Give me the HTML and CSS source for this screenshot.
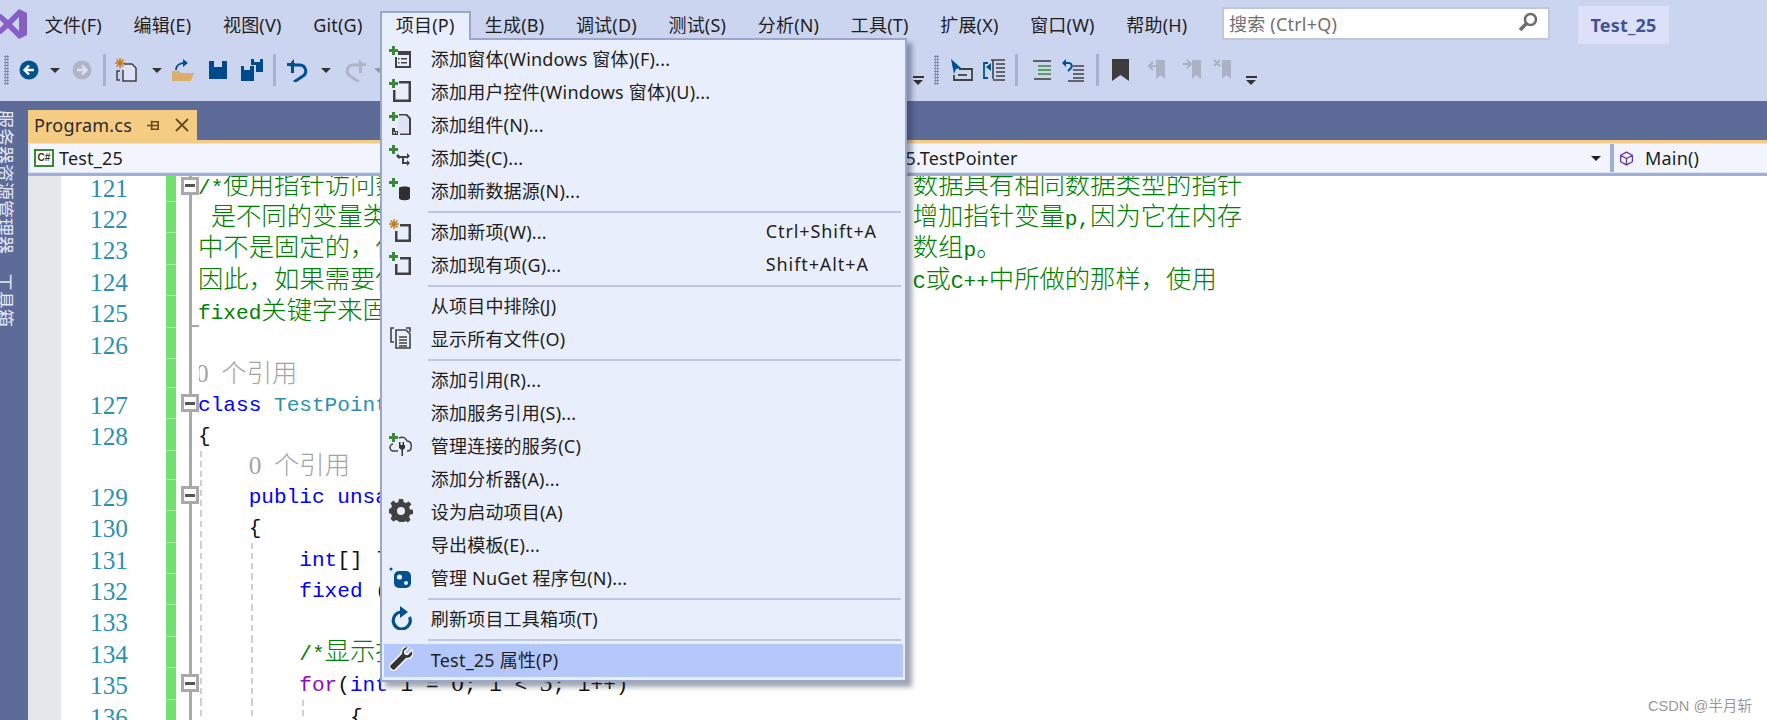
FILE: index.html
```html
<!DOCTYPE html>
<html lang="zh-CN">
<head>
<meta charset="utf-8">
<title>Test_25 - Visual Studio</title>
<link rel="stylesheet" href="styles.css">
</head>
<body>
<div class="app">
  <header class="menubar">
    <svg class="logo" viewBox="0 0 27 30"><path fill="#865fc5" fill-rule="evenodd" d="M19 0 27 4V26L19 30 8 19 1 25-3 23V7L1 5 8 11ZM19 8 12 15 19 22ZM0 11V19L4 15Z"/></svg>
    <nav class="menus">
      <span class="mi">文件(F)</span>
      <span class="mi">编辑(E)</span>
      <span class="mi">视图(V)</span>
      <span class="mi">Git(G)</span>
      <span class="mi open">项目(P)
        <div class="drop">
          <div class="it"><svg class="ic" viewBox="0 0 24 24"><path fill="#388a34" d="M3 0h3v3h3v3H6v3H3V6H0V3h3z"/><path fill="#424242" d="M9 5h13v17H6v-11h2v9h12V9H9z"/><path fill="#424242" d="M9 12h1.500v1.500H9zM9 16h1.500v1.500H9zM12 12h6v1.500h-6zM12 16h6v1.500h-6z"/></svg><span>添加窗体(Windows 窗体)(F)...</span></div>
          <div class="it"><svg class="ic" viewBox="0 0 24 24"><path fill="#388a34" d="M3 0h3v3h3v3H6v3H3V6H0V3h3z"/><path fill="#424242" d="M10 2h12v21H4V11h2.500v9.500h13V4.500H10z"/></svg><span>添加用户控件(Windows 窗体)(U)...</span></div>
          <div class="it"><svg class="ic" viewBox="0 0 24 24"><path fill="#388a34" d="M3 0h3v3h3v3H6v3H3V6H0V3h3z"/><path fill="#dfe1f5" d="M9 3h8l4 4v14H9z"/><path fill="#424242" d="M10 2h8l4 4v17H11v-1.500h9V7l-3-3.500h-7zM3 16h3v3h3v4H3zM4.500 20v1.500H6V20zM7 20v1.500h1V20z"/></svg><span>添加组件(N)...</span></div>
          <div class="it"><svg class="ic" viewBox="0 0 24 24"><path fill="#388a34" d="M3 0h3v3h3v3H6v3H3V6H0V3h3z"/><path fill="#424242" d="M9 9l3 3-2 2-3-3zM11 11h8v2h-4v4h3v2h-5v-6h-2zM18 8l3 3-3 3zM18 15l3 3-3 3z"/></svg><span>添加类(C)...</span></div>
          <div class="it"><svg class="ic" viewBox="0 0 24 24"><path fill="#388a34" d="M3 0h3v3h3v3H6v3H3V6H0V3h3z"/><path fill="#2f2f2f" d="M10 10c0-2 11-2 11 0v10c0 3-11 3-11 0z"/></svg><span>添加新数据源(N)...</span></div>
          <div class="sep"></div>
          <div class="it"><svg class="ic" viewBox="0 0 24 24"><path stroke="#c27d1a" stroke-width="1.500" d="M5 0v10M0 5h10M1.500 1.500l7 7M8.500 1.500l-7 7"/><path fill="#424242" d="M11 5h11v18H6V12h2.500v8.500h11v-13H11z"/></svg><span>添加新项(W)...</span><span class="sc">Ctrl+Shift+A</span></div>
          <div class="it"><svg class="ic" viewBox="0 0 24 24"><path fill="#388a34" d="M3 0h3v3h3v3H6v3H3V6H0V3h3z"/><path fill="#424242" d="M11 5h11v18H6V12h2.500v8.500h11v-13H11z"/></svg><span>添加现有项(G)...</span><span class="sc">Shift+Alt+A</span></div>
          <div class="sep"></div>
          <div class="it"><span class="ic"></span><span>从项目中排除(J)</span></div>
          <div class="it"><svg class="ic" viewBox="0 0 24 24"><path fill="none" stroke="#424242" stroke-width="1.600" d="M5 2H2v14h3M17 2h4v4"/><path fill="#e9eefc" stroke="#424242" stroke-width="1.600" d="M7 4h10l4 4v14H7z"/><path stroke="#424242" stroke-width="1.400" d="M10 11h8M10 14h8M10 17h8M10 20h8"/></svg><span>显示所有文件(O)</span></div>
          <div class="sep"></div>
          <div class="it"><span class="ic"></span><span>添加引用(R)...</span></div>
          <div class="it"><span class="ic"></span><span>添加服务引用(S)...</span></div>
          <div class="it"><svg class="ic" viewBox="0 0 24 24"><path fill="#388a34" d="M3 0h3v3h3v3H6v3H3V6H0V3h3z"/><path fill="none" stroke="#424242" stroke-width="1.500" d="M9 18H5a3.500 3.500 0 0 1-1-7M10 5c4-2 7 0 8 3 4 0 5 4 4 7 0 2-2 3-4 3"/><path fill="#333" d="M10 9h1.500v3h2V9H15v3h1v3l-2 2v6h-1.500v-6l-2.500-2v-3z"/></svg><span>管理连接的服务(C)</span></div>
          <div class="it"><span class="ic"></span><span>添加分析器(A)...</span></div>
          <div class="it"><svg class="ic" viewBox="0 0 24 24"><path fill="#424242" fill-rule="evenodd" d="M10 1h4l.7 3 2.300 1 2.700-1.600 2.800 2.800L20 9l1 2.300 3 .7v4l-3 .7-1 2.300 1.600 2.700-2.800 2.800L17 23l-2.300 1H10l-.7-1-2.300-1-2.700 1.600-2.800-2.800L3 18l-1-2.300-3-.7v-4l3-.7 1-2.300-1.500-2.800 2.800-2.800L7 5l2.300-1zM12 9a4 4 0 1 0 0 8 4 4 0 0 0 0-8z" transform="translate(0 -1)"/></svg><span>设为启动项目(A)</span></div>
          <div class="it"><span class="ic"></span><span>导出模板(E)...</span></div>
          <div class="it"><svg class="ic" viewBox="0 0 24 24"><circle cx="2" cy="4" r="1.500" fill="#00518f"/><rect x="5" y="6" width="17" height="17" rx="5" fill="#00518f"/><circle cx="10.500" cy="12" r="2.600" fill="#e9eefc"/><circle cx="17" cy="18" r="2" fill="#e9eefc"/></svg><span>管理 NuGet 程序包(N)...</span></div>
          <div class="sep"></div>
          <div class="it"><svg class="ic" viewBox="0 0 24 24"><path fill="none" stroke="#00518f" stroke-width="3.200" d="M20.500 11A8.500 8.500 0 1 1 12 6"/><path fill="#00518f" d="M11 0l8 6-8 6z"/></svg><span>刷新项目工具箱项(T)</span></div>
          <div class="sep"></div>
          <div class="it hot"><svg class="ic" viewBox="0 0 24 24"><path fill="#333" stroke="#fff" stroke-width="1.300" d="M23 3l-4.500 4.500-2.500-.5-.5-2.500L20 0c-3.500-1.500-8 1-7.500 6.500L1 18c-2 2 3 7 5 5L17.500 11.500C23 12 25 7 23 3z"/></svg><span>Test_25 属性(P)</span></div>
        </div>
      </span>
      <span class="mi">生成(B)</span>
      <span class="mi">调试(D)</span>
      <span class="mi">测试(S)</span>
      <span class="mi">分析(N)</span>
      <span class="mi">工具(T)</span>
      <span class="mi">扩展(X)</span>
      <span class="mi">窗口(W)</span>
      <span class="mi">帮助(H)</span>
    </nav>
    <div class="search"><span>搜索 (Ctrl+Q)</span><svg class="mag" viewBox="0 0 20 20"><circle cx="12.500" cy="7.500" r="5.500" fill="none" stroke="#6d6d6d" stroke-width="2.600"/><path stroke="#6d6d6d" stroke-width="3.600" d="M8.500 11.500 2 18"/></svg></div>
    <div class="title">Test_25</div>
  </header>

  <div class="toolbar">
    <span class="grip"></span>
    <svg class="t20" viewBox="0 0 20 20"><circle cx="10" cy="10" r="9.500" fill="#00518f"/><path fill="none" stroke="#fff" stroke-width="2.400" d="M15 10H6M10 5.500 5.500 10l4.500 4.500"/></svg>
    <span class="dd"></span>
    <svg class="t20" viewBox="0 0 20 20"><circle cx="10" cy="10" r="9.500" fill="#b0b5c6"/><path fill="none" stroke="#dde2f2" stroke-width="2.400" d="M5 10h9M10 5.500l4.500 4.500-4.500 4.500"/></svg>
    <span class="tsep"></span>
    <svg class="t24" viewBox="0 0 24 24"><path stroke="#c27d1a" stroke-width="1.500" d="M6 0v10M1 5h10M2.500 1.500l7 7M9.500 1.500l-7 7"/><path fill="#dfe1f5" stroke="#424242" stroke-width="1.500" d="M10 6h8l4 4v13H9V12"/><path fill="none" stroke="#424242" stroke-width="1.500" d="M6 13H3v9h3"/></svg>
    <span class="dd"></span>
    <svg class="t24" viewBox="0 0 24 24"><path fill="#dcae6c" d="M1 13h7l2 2h13l-3 8H1z"/><path fill="none" stroke="#00518f" stroke-width="1.800" d="M5 12C5 7 9 5 14 5"/><path fill="#00518f" d="M12 1l5 4-5 4z"/></svg>
    <svg class="t20" viewBox="0 0 20 20"><path fill="#00498c" fill-rule="evenodd" d="M1 1h18v18H1zM6 1v6h8V1z"/></svg>
    <svg class="t24" viewBox="0 0 24 24"><path fill="#00498c" fill-rule="evenodd" d="M1 8h13v15H1zM4 8v4h6V8z"/><path fill="#00498c" fill-rule="evenodd" d="M11 1h12v13h-7V7h-5zM14 1v3h6V1z"/></svg>
    <span class="tsep"></span>
    <svg class="t24" viewBox="0 0 24 24"><path fill="none" stroke="#00518f" stroke-width="3" d="M4 7h10a6 6 0 0 1 3 11L8 24"/><path fill="#00518f" d="M8 1v14H5V4z"/><path fill="#00518f" d="M1 5h8v3H1z"/></svg>
    <span class="dd"></span>
    <svg class="t24" viewBox="0 0 24 24"><path fill="none" stroke="#b0b5c6" stroke-width="3" d="M20 7H10a6 6 0 0 0-3 11l9 6"/><path fill="#b0b5c6" d="M16 1v14h3V4z"/><path fill="#b0b5c6" d="M15 5h8v3h-8z"/></svg>
    <span class="dd off"></span>
    <span></span>
    <span class="ov"></span>
    <span class="grip"></span>
    <svg class="t24" viewBox="0 0 24 24"><path fill="#00518f" d="M2 1l10 9-5 1-2 5z"/><path fill="none" stroke="#424242" stroke-width="1.800" d="M10 11h13v11H5v-5"/><path stroke="#424242" stroke-width="1.800" d="M9 17h9"/></svg>
    <svg class="t24" viewBox="0 0 24 24"><path fill="none" stroke="#00518f" stroke-width="1.800" d="M6 5H2v15h4"/><path fill="#00518f" d="M4 9l5-4v8z"/><path fill="none" stroke="#424242" stroke-width="1.600" d="M9 2h14M11 2v19M14 6h9M14 10h9M14 14h9M14 18h9M11 22h12"/></svg>
    <span class="tsep"></span>
    <svg class="t24" viewBox="0 0 24 24"><path stroke="#424242" stroke-width="1.600" d="M3 3h18"/><path stroke="#388a34" stroke-width="1.600" d="M8 8h13M8 12h13M8 16h13"/><path stroke="#424242" stroke-width="1.600" d="M4 21h17"/></svg>
    <svg class="t24" viewBox="0 0 24 24"><path fill="none" stroke="#00518f" stroke-width="2" d="M3 5h5a3 3 0 0 1 2 5l-3 3"/><path fill="#00518f" d="M1 5l4-4v8z"/><path stroke="#424242" stroke-width="1.600" d="M12 8h11M12 12h11M12 16h11M12 20h11M7 23h16"/></svg>
    <span class="tsep"></span>
    <svg class="t24" viewBox="0 0 24 24"><path fill="#3c3c3c" d="M3 1h17v22l-8.500-6L3 23z"/></svg>
    <svg class="t24" viewBox="0 0 24 24"><path fill="#abb2c4" d="M10 2h9v19l-4.500-4-4.500 4z"/><path fill="none" stroke="#abb2c4" stroke-width="2.200" d="M11 8H3M7 4 3 8l4 4"/></svg>
    <svg class="t24" viewBox="0 0 24 24"><path fill="#abb2c4" d="M10 2h9v19l-4.500-4-4.500 4z"/><path fill="none" stroke="#abb2c4" stroke-width="2.200" d="M1 6h8M5 2l4 4-4 4"/></svg>
    <svg class="t24" viewBox="0 0 24 24"><path fill="#abb2c4" d="M10 2h9v19l-4.500-4-4.500 4z"/><path stroke="#abb2c4" stroke-width="2.200" d="M2 2l6 6M8 2 2 8"/></svg>
    <span class="ov"></span>
  </div>

  <div class="body">
    <aside class="side"><span class="sv">服务器资源管理器</span><span class="sv">工具箱</span></aside>
    <main class="main">
      <div class="tabs">
        <div class="tab"><span>Program.cs</span>
          <svg class="pin" viewBox="0 0 14 14"><path fill="none" stroke="#6b4a1c" stroke-width="1.800" d="M0 7h5M5 2v10M5 3h7v8H5M5 7h7"/></svg>
          <svg class="cls" viewBox="0 0 14 14"><path stroke="#6b4a1c" stroke-width="1.900" d="M1 1l12 12M13 1 1 13"/></svg>
        </div>
      </div>
      <div class="nav">
        <div class="combo c1"><span class="cs">C#</span><span>Test_25</span></div>
        <div class="combo c2"><span>Test_25.TestPointer</span><span class="arrow"></span></div>
        <div class="combo c3"><svg class="cube" viewBox="0 0 14 14"><path fill="none" stroke="#6936aa" stroke-width="1.200" d="M7 1l5.500 3v6L7 13l-5.500-3V4zM1.500 4 7 7l5.500-3M7 7v6"/></svg><span>Main()</span></div>
      </div>
      <div class="editor">
        <div class="row"><span class="num">121</span><span class="chg"></span><span class="fold"><span class="box"></span></span><span class="code cm">/*<span class="z">使用指针访问数组元素</span>: <span class="z">在</span>C#<span class="z">中，数组名称和一个指向与数组</span><span class="z gap">数据具有相同数据类型的指针</span></span></div>
        <div class="row"><span class="num">122</span><span class="chg"></span><span class="fold"></span><span class="code cm"> <span class="z">是不同的变量类型。例如</span>,int *p<span class="z">和</span>int[] p<span class="z">是不同的类型</span>.<span class="z">可以</span><span class="z gap">增加指针变量</span>p,<span class="z">因为它在内存</span></span></div>
        <div class="row"><span class="num">123</span><span class="chg"></span><span class="fold"></span><span class="code cm"><span class="z">中不是固定的，但是数组地址在内存中是固定的，所以不能增加</span><span class="z gap">数组</span>p<span class="z">。</span></span></div>
        <div class="row"><span class="num">124</span><span class="chg"></span><span class="fold"></span><span class="code cm"><span class="z">因此，如果需要使用指针变量访问数组数据，可以像我们通常在</span><span class="gap">C</span><span class="z">或</span>C++<span class="z">中所做的那样，使用</span></span></div>
        <div class="row"><span class="num">125</span><span class="chg"></span><span class="fold tick"></span><span class="code cm">fixed<span class="z">关键字来固定指针。</span>*/</span></div>
        <div class="row"><span class="num">126</span><span class="chg"></span><span class="fold"></span><span class="code"></span></div>
        <div class="row ref"><span class="num"></span><span class="chg"></span><span class="fold"></span><span class="code gr lead"><span class="d">0</span> <span class="z">个引用</span></span></div>
        <div class="row"><span class="num">127</span><span class="chg"></span><span class="fold"><span class="box"></span></span><span class="code"><span class="kw">class</span> <span class="ty">TestPointer</span></span></div>
        <div class="row"><span class="num">128</span><span class="chg"></span><span class="fold"></span><span class="code">{</span></div>
        <div class="row ref"><span class="num"></span><span class="chg"></span><span class="fold"></span><span class="code g1 gr">    <span class="d">0</span> <span class="z">个引用</span></span></div>
        <div class="row"><span class="num">129</span><span class="chg"></span><span class="fold"><span class="box"></span></span><span class="code g1">    <span class="kw">public unsafe static void</span> Main()</span></div>
        <div class="row"><span class="num">130</span><span class="chg"></span><span class="fold"></span><span class="code g1">    {</span></div>
        <div class="row"><span class="num">131</span><span class="chg"></span><span class="fold"></span><span class="code g1 g2">        <span class="kw">int</span>[] list = { 10, 100, 200 };</span></div>
        <div class="row"><span class="num">132</span><span class="chg"></span><span class="fold"></span><span class="code g1 g2">        <span class="kw">fixed</span> (<span class="kw">int</span>* ptr = list)</span></div>
        <div class="row"><span class="num">133</span><span class="chg"></span><span class="fold"></span><span class="code g1 g2"></span></div>
        <div class="row"><span class="num">134</span><span class="chg"></span><span class="fold"></span><span class="code g1 g2 cm">        /*<span class="z">显示指针中数组地址</span>*/</span></div>
        <div class="row"><span class="num">135</span><span class="chg"></span><span class="fold"><span class="box"></span></span><span class="code g1 g2">        <span class="pk">for</span>(<span class="kw">int</span> i = <span class="d">0</span>; i &lt; <span class="d">3</span>; i++)</span></div>
        <div class="row"><span class="num">136</span><span class="chg"></span><span class="fold"></span><span class="code g1 g2 g3">            {</span></div>
      </div>
    </main>
  </div>
  <div class="mark">CSDN @半月斩</div>
</div>
</body>
</html>
```

FILE: styles.css
```css
* { box-sizing: border-box; }
html, body { margin: 0; padding: 0; background: #fff; }
body { font-family: "Noto Sans", "Noto Sans CJK SC", sans-serif; font-size: 18px; color: #1e1e1e; letter-spacing: .2px; }
svg { display: block; flex: none; }

.app { position: relative; width: 1767px; height: 720px; overflow: hidden; display: flex; flex-direction: column; }

/* menu bar */
.menubar { height: 50px; background: #ccd5f0; display: flex; align-items: flex-start; flex: none; }
.logo { width: 27px; height: 30px; margin-top: 9px; margin-right: 2px; }
.menus { display: flex; margin-top: 12px; width: 1193px; }
.mi { position: relative; height: 26px; line-height: 26px; padding: 0 15.800px; white-space: nowrap; }
.mi.open { background: #e9eefc; box-shadow: inset 2px 2px 0 #9ba7ca, inset -2px 0 0 #9ba7ca; padding: 1px 16px 0; height: 27px; margin: -1px -1.500px 0 1.500px; z-index: 5; }
.mi.open::after { content: ""; position: absolute; left: 2px; right: 2px; bottom: -2px; height: 2px; background: #e9eefc; }
.drop { position: absolute; left: 0; top: 27px; width: 527px; background: #e9eefc; border: 2px solid #9ba7ca; padding: 2.500px 2px 3px; box-shadow: 5px 5px 5px rgba(30,40,70,.42); line-height: normal; }
.it { height: 33px; display: flex; align-items: center; padding: 0 0 3px 5px; position: relative; }
.it.hot { background: #b3c7fb; }
.ic { width: 24px; height: 24px; margin-right: 18px; flex: none; }
.sc { position: absolute; left: 382px; letter-spacing: .9px; }
.sep { height: 2px; margin: 3px 2px 3px 44px; background: #bdc6e3; }

.search { width: 328px; height: 33px; margin: 7px 0 0 0; background: #fff; border: 2px solid #bfc7d8; display: flex; align-items: center; justify-content: space-between; padding: 0 10px 2px 5px; color: #717171; }
.mag { width: 20px; height: 20px; margin-bottom: 2px; }
.title { margin: 6px 0 0 28px; width: 91px; height: 38px; line-height: 38px; text-align: center; background: #dce0f8; color: #3f5590; font-weight: 700; }

/* tool bar */
.toolbar { height: 51px; padding-bottom: 11px; background: #ccd5f0; flex: none; display: grid; align-items: center; justify-items: center;
  grid-template-columns: 12px 34px 18px 36px 8px 36px 26px 26px 44px 24px 20px 28px 28px 30px 18px 520px 20px 16px 34px 32px 12px 40px 22px 26px 22px 52px 20px 40px 14px; }
.grip { width: 5px; height: 30px; background: radial-gradient(circle, #7e8aa8 1px, transparent 1.300px) 0 0 / 2.500px 3px; }
.t20 { width: 20px; height: 20px; }
.t24 { width: 24px; height: 24px; }
.dd { width: 0; height: 0; border: 5px solid transparent; border-top: 5px solid #333; border-bottom: 0; }
.dd.off { border-top-color: #8f97ab; }
.tsep { width: 3px; height: 32px; background: #a5b3d3; }
.ov { width: 11px; height: 8px; margin-top: 20px; border-top: 2px solid #333; position: relative; }
.ov::after { content: ""; display: block; margin: 2px auto 0; width: 0; height: 0; border: 5px solid transparent; border-top: 5px solid #333; border-bottom: 0; }

/* body */
.body { flex: 1; display: flex; min-height: 0; }
.side { width: 28px; background: #5d6b99; color: #e3e7f6; display: flex; flex-direction: column; gap: 19px; padding-top: 9px; overflow: hidden; flex: none; }
.sv { writing-mode: vertical-rl; text-orientation: sideways; font-size: 18px; line-height: 18px; margin-left: -4px; width: 18px; white-space: nowrap; letter-spacing: 0; }

.main { flex: 1; min-width: 0; display: flex; flex-direction: column; }
.tabs { height: 42px; background: #5d6b99; padding-top: 9px; border-bottom: 3px solid #f5cc84; flex: none; }
.tab { width: 169px; height: 30px; background: #f5cc84; display: flex; align-items: center; padding-left: 6px; color: #2a2a2a; }
.pin { width: 13px; height: 13px; margin-left: 15px; }
.cls { width: 14px; height: 14px; margin-left: 15px; }

.nav { height: 33px; flex: none; display: flex; background: #dbe3f6; border-bottom: 3px solid #9fb0d5; padding: 1px 0 1px 2px; }
.combo { background: #f2f5fd; display: flex; align-items: center; white-space: nowrap; }
.c1 { width: 806px; padding-left: 4px; }
.c2 { width: 774px; margin-right: 4px; padding-left: 16px; justify-content: space-between; padding-right: 9px; box-shadow: 4px 0 0 #9fb0d5; }
.c3 { flex: 1; padding-left: 5px; }
.cs { width: 20px; height: 18px; margin-right: 5px; border: 2px solid #388a34; background: #fff; color: #333; font: 700 10px/14px "Liberation Sans", sans-serif; text-align: center; letter-spacing: 0; }
.arrow { width: 0; height: 0; border: 5px solid transparent; border-top: 5px solid #222; border-bottom: 0; }
.cube { width: 15px; height: 15px; margin-right: 11px; }

/* editor */
.editor { flex: 1; min-height: 0; overflow: hidden; background: #fff; letter-spacing: 0; }
.row { display: flex; height: 31.400px; margin: 0; }
.row:first-child { margin-top: -5.400px; }
.row.ref { height: 29.100px; }
.num { width: 138px; flex: none; border-left: 33px solid #e6e7e9; padding-left: 29px; font: 25.330px/35px "Liberation Serif", serif; color: #2b91af; }
.chg { width: 10px; flex: none; background: #71e06f; border-bottom: 1px solid #a4eaa2; }
.fold { width: 18px; flex: none; margin-left: 5px; position: relative; z-index: 1; display: flex; align-items: center; padding-bottom: 1px; background: linear-gradient(#a9a9a9, #a9a9a9) 8px 0 / 3px 100% no-repeat, #fff; }
.fold.tick { background: linear-gradient(#a9a9a9, #a9a9a9) 8px 0 / 3px 100% no-repeat, linear-gradient(#a9a9a9, #a9a9a9) 8px 29px / 10px 2px no-repeat, #fff; }
.box { width: 18px; height: 18px; border: 3px solid #a9a9a9; background: linear-gradient(#555, #555) center / 10px 3px no-repeat, #fff; }
.code { flex: 1; min-width: 0; margin-left: -1px; white-space: pre; font: 21.100px/35px "Liberation Mono", monospace; color: #111; }
.cm { line-height: 33px; }
.z { font-family: "Noto Sans CJK SC", sans-serif; font-size: 25.330px; font-weight: 300; line-height: 25px; }
.d { font-family: "Liberation Serif", serif; font-size: 25.330px; line-height: 25px; }
.gap { margin-left: 5.600px; }
.cm { color: #008000; }
.kw { color: #0000ff; }
.pk { color: #8f08c4; }
.ty { color: #2b91af; }
.gr { color: #a3a3a3; line-height: 31px; }
.lead { margin-left: -3px; }
.g1 { background: repeating-linear-gradient(#cfcfcf 0 6px, transparent 6px 10px) 2px 0 / 2px 100% no-repeat; }
.g2 { background: repeating-linear-gradient(#cfcfcf 0 6px, transparent 6px 10px) 2px 0 / 2px 100% no-repeat, repeating-linear-gradient(#cfcfcf 0 6px, transparent 6px 10px) 53px 0 / 2px 100% no-repeat; }
.g3 { background: repeating-linear-gradient(#cfcfcf 0 6px, transparent 6px 10px) 2px 0 / 2px 100% no-repeat, repeating-linear-gradient(#cfcfcf 0 6px, transparent 6px 10px) 53px 0 / 2px 100% no-repeat, repeating-linear-gradient(#cfcfcf 0 6px, transparent 6px 10px) 104px 0 / 2px 100% no-repeat; }

.mark { position: absolute; right: 15px; bottom: 5px; font-size: 14.600px; color: #999; letter-spacing: 0; font-family: "Liberation Sans", "Noto Sans CJK SC", sans-serif; }
```
